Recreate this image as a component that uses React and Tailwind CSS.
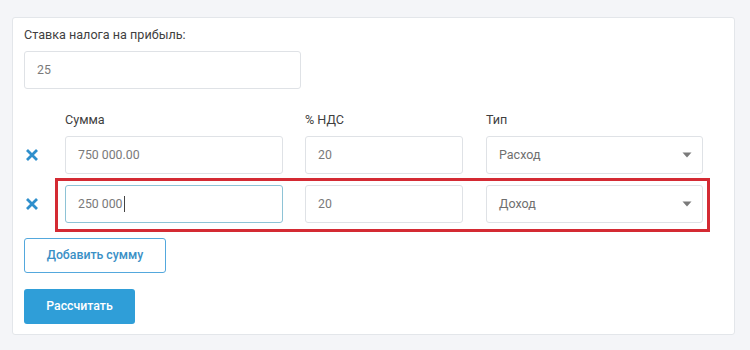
import React from "react";

function XIcon() {
  return (
    <svg width="14" height="14" viewBox="0 0 14 14" className="block">
      <path d="M2 2 L12 12 M12 2 L2 12" stroke="#2f8fcc" strokeWidth="2.8" strokeLinecap="butt" />
    </svg>
  );
}

function Caret() {
  return (
    <svg width="10" height="6" viewBox="0 0 10 6" className="block">
      <path d="M0.5 0.5 L9.5 0.5 L5 5.5 Z" fill="#7a7a7a" />
    </svg>
  );
}

function Field({ value, w, focused }) {
  return (
    <div
      className={`h-[38px] ${w} rounded-[3px] border bg-white flex items-center pl-3 text-[12.3px] text-[#7a7a7a] ${
        focused ? "border-[#8ec3d6]" : "border-[#dfe2e6]"
      }`}
    >
      {value}
      {focused && <span className="inline-block w-px h-[16px] bg-[#444] ml-px" />}
    </div>
  );
}

function Select({ value }) {
  return (
    <div className="h-[38px] w-[217px] rounded-[3px] border border-[#dfe2e6] bg-white flex items-center justify-between pl-3 pr-[10px] text-[12.5px] text-[#6f6f6f]">
      <span>{value}</span>
      <Caret />
    </div>
  );
}

function Row({ sum, vat, type, focused, highlight }) {
  return (
    <div className="relative flex items-center">
      <div className="w-[41px] flex items-center pl-px">
        <XIcon />
      </div>
      <Field value={sum} w="w-[218px]" focused={focused} />
      <div className="w-[22px]" />
      <Field value={vat} w="w-[158px]" />
      <div className="w-[23px]" />
      <Select value={type} />
      {highlight && (
        <div className="absolute left-[31px] top-[-7px] w-[655px] h-[54px] border-[3px] border-[#d42a33] pointer-events-none" />
      )}
    </div>
  );
}

export default function App() {
  return (
    <div
      className="w-[750px] h-[350px] bg-[#f4f5f8] pt-[17px] pl-[12px]"
      style={{ fontFamily: "Roboto, 'Noto Sans', sans-serif" }}
    >
      <div className="w-[723px] h-[318px] bg-white border border-[#e3e6ea] rounded-[3px] pl-[11px] pt-[7px]">
        <div className="text-[12.6px] leading-[20px] text-[#3f3f3f]">Ставка налога на прибыль:</div>
        <div className="mt-[6px]">
          <Field value="25" w="w-[277px]" />
        </div>
        <div className="mt-[21px] flex text-[12.6px] leading-[20px] text-[#3f3f3f]">
          <div className="w-[41px]" />
          <div className="w-[240px]">Сумма</div>
          <div className="w-[181px]">% НДС</div>
          <div>Тип</div>
        </div>
        <div className="mt-[6px] flex flex-col gap-[11px]">
          <Row sum="750 000.00" vat="20" type="Расход" />
          <Row sum="250 000" vat="20" type="Доход" focused highlight />
        </div>
        <div className="mt-[15px] w-[142px] h-[35px] rounded-[3px] border border-[#54a8dd] flex items-center justify-center text-[12.3px] font-medium text-[#3a90c6]">
          Добавить сумму
        </div>
        <div className="mt-[16px] w-[111px] h-[35px] rounded-[3px] bg-[#2f9ed8] flex items-center justify-center text-[12.3px] font-medium text-white">
          Рассчитать
        </div>
      </div>
    </div>
  );
}
